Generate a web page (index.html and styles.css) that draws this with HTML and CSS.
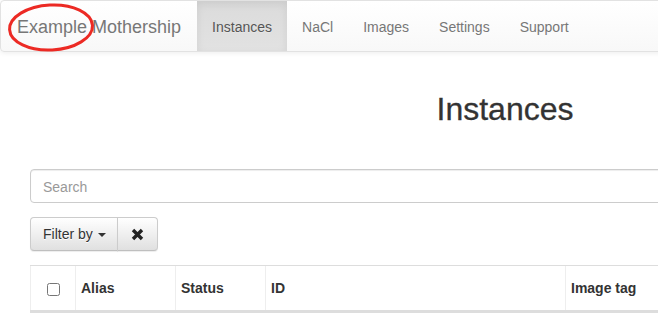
FILE: index.html
```html
<!DOCTYPE html>
<html lang="en">
<head>
  <meta charset="UTF-8" />
  <title>Instances - Example Mothership</title>
  <link rel="stylesheet" href="styles.css">
</head>
<body>
  <nav class="navbar">
    <a class="brand" href="#">Example Mothership</a>
    <svg class="mark" width="96" height="54" viewBox="0 0 96 54">
      <ellipse cx="50" cy="26.5" rx="41.5" ry="22.5" fill="none" stroke="#ec2a24" stroke-width="3" transform="rotate(-3 50 26)" />
    </svg>
    <ul class="nav">
      <li class="active"><a href="#">Instances</a></li>
      <li><a href="#">NaCl</a></li>
      <li><a href="#">Images</a></li>
      <li><a href="#">Settings</a></li>
      <li><a href="#">Support</a></li>
    </ul>
  </nav>

  <div class="container">
    <h1>Instances</h1>

    <input class="search" type="text" placeholder="Search" />

    <div class="btn-group">
      <button class="btn" type="button">Filter by <span class="caret"></span></button>
      <button class="btn btn-icon" type="button" aria-label="Clear">
        <svg width="13" height="13" viewBox="0 0 13 13">
          <path d="M2 2 L11 11 M11 2 L2 11" stroke="#222" stroke-width="3.4" stroke-linecap="butt" />
        </svg>
      </button>
    </div>

    <table class="table">
      <thead>
        <tr>
          <th class="col-check"><input type="checkbox" /></th>
          <th class="col-alias">Alias</th>
          <th class="col-status">Status</th>
          <th class="col-id">ID</th>
          <th>Image tag</th>
        </tr>
      </thead>
    </table>
  </div>
</body>
</html>
```

FILE: styles.css
```css
html, body {
  overflow: hidden;
}
body {
  margin: 0;
  font-family: "Liberation Sans", Arial, sans-serif;
  font-size: 14px;
  line-height: 20px;
  color: #333;
  background: #fff;
  width: 1010px;
}
a {
  text-decoration: none;
}

.navbar {
  position: relative;
  display: flex;
  height: 50px;
  border: 1px solid #e2e2e2;
  border-radius: 4px;
  background: linear-gradient(to bottom, #fff 0%, #f8f8f8 100%);
  box-shadow: inset 0 1px 0 rgba(255, 255, 255, .15), 0 1px 5px rgba(0, 0, 0, .075);
}
.brand {
  padding: 16px 16px 14px 16px;
  font-size: 18px;
  line-height: 20px;
  color: #777;
  text-shadow: 0 1px 0 rgba(255, 255, 255, .25);
}
.mark {
  position: absolute;
  left: 0;
  top: 0;
}
.nav {
  display: flex;
  margin: 0;
  padding: 0;
  list-style: none;
}
.nav a {
  display: block;
  padding: 16px 15px 14px 15px;
  color: #777;
  text-shadow: 0 1px 0 rgba(255, 255, 255, .25);
}
.nav .active a {
  color: #555;
  background: linear-gradient(to bottom, #dbdbdb 0%, #e2e2e2 100%);
  box-shadow: inset 0 3px 9px rgba(0, 0, 0, .075);
}

.container {
  width: 950px;
  margin-left: 30px;
}
h1 {
  margin: 39px 0 42px;
  font-size: 32px;
  font-weight: normal;
  line-height: 36px;
  text-align: center;
  color: #333;
  -webkit-text-stroke: 0.3px #333;
}
.search {
  display: block;
  box-sizing: border-box;
  width: 100%;
  height: 34px;
  padding: 7px 12px 5px;
  font: inherit;
  border: 1px solid #ccc;
  border-radius: 4px;
  box-shadow: inset 0 1px 1px rgba(0, 0, 0, .075);
}
.search::placeholder {
  color: #999;
}

.btn-group {
  display: flex;
  margin-top: 14px;
}
.btn {
  height: 34px;
  padding: 6px 11px 6px 12px;
  font: inherit;
  color: #333;
  background: linear-gradient(to bottom, #fff 0%, #e0e0e0 100%);
  border: 1px solid #ccc;
  border-bottom-color: #bfbfbf;
  border-radius: 4px 0 0 4px;
  box-shadow: inset 0 1px 0 rgba(255, 255, 255, .15), 0 1px 1px rgba(0, 0, 0, .075);
  text-shadow: 0 1px 0 #fff;
}
.btn-icon {
  width: 41px;
  margin-left: -1px;
  border-radius: 0 4px 4px 0;
  display: flex;
  align-items: center;
  justify-content: center;
}
.caret {
  display: inline-block;
  width: 0;
  height: 0;
  margin-left: 1px;
  vertical-align: middle;
  border-top: 4px solid #333;
  border-left: 4px solid transparent;
  border-right: 4px solid transparent;
}

.table {
  width: 100%;
  margin-top: 14px;
  border-collapse: collapse;
  border-spacing: 0;
}
.table th {
  padding: 12px 5px 12px 5px;
  text-align: left;
  font-weight: bold;
  line-height: 20px;
  border-top: 1px solid #ddd;
  border-left: 1px solid #eee;
  border-bottom: 3px solid #ddd;
}
.col-check {
  width: 34px;
  text-align: center !important;
}
.col-check input {
  margin: 0;
  width: 13px;
  height: 13px;
  vertical-align: middle;
}
.col-alias {
  width: 89px;
}
.col-status {
  width: 79px;
}
.col-id {
  width: 289px;
}
```
